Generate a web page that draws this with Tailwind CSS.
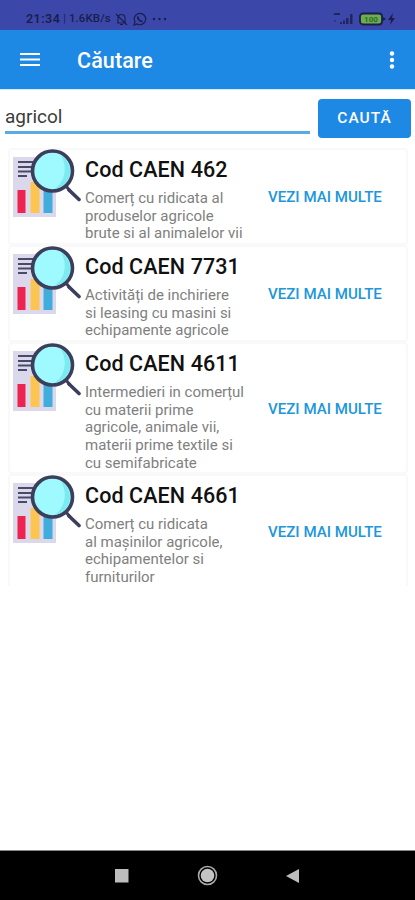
<!DOCTYPE html>
<html lang="ro">
<head>
<meta charset="utf-8">
<title>Căutare</title>
<script src="https://cdn.jsdelivr.net/npm/@tailwindcss/browser@4"></script>
</head>
<body class="bg-white">
<svg class="hidden">
  <symbol id="report" viewBox="0 0 72 70">
    <rect x="4" y="8" width="43" height="60" fill="#dcd8ec"/>
    <path d="M9 13h15M9 18h15M9 22.500h13M9 27h9" stroke="#474a68" stroke-width="1.800"/>
    <rect x="8.500" y="41" width="8" height="23" fill="#ee2350"/>
    <rect x="21.500" y="33" width="9" height="31" fill="#fcc552"/>
    <rect x="34.500" y="41" width="9" height="23" fill="#41addd"/>
    <path d="M57 37l4 5" stroke="#3b3f5b" stroke-width="3"/>
    <path d="M60 41l10 9.500" stroke="#3b3f5b" stroke-width="3.600" stroke-linecap="round"/>
    <circle cx="43.500" cy="22" r="20" fill="#9ffaff" stroke="#3b3f5b" stroke-width="3.600"/>
    <path d="M52 6.500a18 18 0 0 1-7 33.500c11-6 14-22 7-33.500z" fill="#7ceaf1"/>
  </symbol>
</svg>
<div class="flex h-[900px] w-[415px] flex-col overflow-hidden bg-white font-['Roboto',sans-serif]">
  <header class="flex h-[30px] shrink-0 items-center bg-[#3b48aa] pt-[8px] pl-[26px] text-[#191e4c]">
    <span class="text-[12.5px] font-semibold tracking-[0.45px] whitespace-nowrap">21:34</span>
    <span class="ml-[3px] text-[11px]">|</span>
    <span class="ml-[3px] w-[43px] text-[11.5px] font-medium tracking-[0.1px] whitespace-nowrap">1.6KB/s</span>
    <svg class="ml-[3px]" width="13" height="14" viewBox="0 0 13 14" fill="none" stroke="currentColor" stroke-width="1.100"><path d="M2 11h9M3 10.500V6a3.500 3.500 0 0 1 7 0v4.500M5 12.500h3M1 2l11 11"/></svg>
    <svg class="ml-[5px]" width="14" height="14" viewBox="0 0 14 14" fill="none" stroke="currentColor" stroke-width="1.200"><path d="M1 13l1-3.200A5.700 5.700 0 1 1 4.200 12z"/><path d="M4.800 4.500c0 2.500 2 4.800 4.700 5" stroke-width="1.900"/></svg>
    <svg class="ml-[5px]" width="16" height="4" viewBox="0 0 16 4" fill="currentColor"><circle cx="2" cy="2" r="1.200"/><circle cx="7.500" cy="2" r="1.200"/><circle cx="13" cy="2" r="1.200"/></svg>
    <svg class="ml-auto" width="22" height="14" viewBox="0 0 22 14" fill="currentColor"><path d="M1 3l2-2h5v2zM8 10h2v2H8zM11 8.500h2V12h-2zM14 6h2.500v6H14zM18 2h2.500v10H18z" opacity=".8"/><rect x="2" y="8" width="2" height="1.500" opacity=".5"/></svg>
    <svg class="ml-[5px]" width="27" height="14" viewBox="0 0 27 14"><rect x="1" y="1.500" width="22" height="11" rx="3" fill="#6cae4b" stroke="#191e4c" stroke-width="1.800"/><path d="M24 5l3 2-3 2z" fill="#191e4c"/><text x="12" y="9.800" text-anchor="middle" font-family="Roboto" font-size="8" font-weight="700" fill="#2f6b35">100</text></svg>
    <svg class="mr-[19px] ml-px" width="9" height="12" viewBox="0 0 9 12" fill="#191e4c"><path d="M6 0L1 7h3l-1 5 5-7H5z"/></svg>
  </header>
  <nav class="flex h-[59px] shrink-0 items-center bg-[#1e88e5] text-white">
    <svg class="ml-[20px]" width="20" height="18" viewBox="0 0 20 18" stroke="currentColor" stroke-width="2"><path d="M0 3h20M0 8.500h20M0 14h20"/></svg>
    <h1 class="ml-[37px] pt-[2px] text-[21.5px] leading-none font-medium tracking-[0.1px]">Căutare</h1>
    <svg class="mr-[20px] ml-auto" width="6" height="20" viewBox="0 0 6 20" fill="currentColor"><circle cx="3" cy="3.500" r="2.200"/><circle cx="3" cy="10" r="2.200"/><circle cx="3" cy="16.500" r="2.200"/></svg>
  </nav>
  <div class="flex h-[59px] shrink-0 items-start border-t border-[#d9e8fb] pl-[5px]">
    <div class="mt-[9px] flex h-[35px] w-[305px] items-center border-b-[3px] border-[#5aabe0] pt-[5px] text-[19px] text-[#3c3c3c]">agricol</div>
    <button class="mt-[9px] ml-[8px] h-[39px] w-[93px] rounded-[4px] bg-[#1e88e5] pt-px text-[15.5px] font-medium tracking-[1px] text-white">CAUTĂ</button>
  </div>
  <main class="flex flex-1 flex-col pr-[7px] pl-[8px]">
    <article class="flex h-[97px] shrink-0 rounded-[4px] border-2 border-[#f9f9f9]">
      <svg class="-mt-px -ml-px shrink-0" width="72" height="70"><use href="#report"/></svg>
      <div class="w-[176px] shrink-0 pt-[8px] pl-[4px] whitespace-nowrap">
        <h2 class="h-[32px] text-[21.5px] leading-[24px] font-medium tracking-[0.1px] text-[#111]">Cod CAEN 462</h2>
        <p class="text-[15px] leading-[17.65px] text-[#808080]">Comerț cu ridicata al<br>produselor agricole<br>brute si al animalelor vii</p>
      </div>
      <a class="ml-[11px] self-center pt-[2px] text-[15.1px] font-medium whitespace-nowrap text-[#2196dc]">VEZI MAI MULTE</a>
    </article>
    <article class="flex h-[97px] shrink-0 rounded-[4px] border-2 border-[#f9f9f9]">
      <svg class="-mt-px -ml-px shrink-0" width="72" height="70"><use href="#report"/></svg>
      <div class="w-[176px] shrink-0 pt-[8px] pl-[4px] whitespace-nowrap">
        <h2 class="h-[32px] text-[21.5px] leading-[24px] font-medium tracking-[0.1px] text-[#111]">Cod CAEN 7731</h2>
        <p class="text-[15px] leading-[17.65px] text-[#808080]">Activități de inchiriere<br>si leasing cu masini si<br>echipamente agricole</p>
      </div>
      <a class="ml-[11px] self-center pt-[2px] text-[15.1px] font-medium whitespace-nowrap text-[#2196dc]">VEZI MAI MULTE</a>
    </article>
    <article class="flex h-[132px] shrink-0 rounded-[4px] border-2 border-[#f9f9f9]">
      <svg class="-mt-px -ml-px shrink-0" width="72" height="70"><use href="#report"/></svg>
      <div class="w-[176px] shrink-0 pt-[8px] pl-[4px] whitespace-nowrap">
        <h2 class="h-[32px] text-[21.5px] leading-[24px] font-medium tracking-[0.1px] text-[#111]">Cod CAEN 4611</h2>
        <p class="text-[15px] leading-[17.65px] text-[#808080]">Intermedieri in comerțul<br>cu materii prime<br>agricole, animale vii,<br>materii prime textile si<br>cu semifabricate</p>
      </div>
      <a class="ml-[11px] self-center pt-[2px] text-[15.1px] font-medium whitespace-nowrap text-[#2196dc]">VEZI MAI MULTE</a>
    </article>
    <article class="flex h-[112px] shrink-0 rounded-t-[4px] border-2 border-b-0 border-[#f9f9f9]">
      <svg class="-mt-px -ml-px shrink-0" width="72" height="70"><use href="#report"/></svg>
      <div class="w-[176px] shrink-0 pt-[8px] pl-[4px] whitespace-nowrap">
        <h2 class="h-[32px] text-[21.5px] leading-[24px] font-medium tracking-[0.1px] text-[#111]">Cod CAEN 4661</h2>
        <p class="text-[15px] leading-[17.65px] text-[#808080]">Comerț cu ridicata<br>al mașinilor agricole,<br>echipamentelor si<br>furniturilor</p>
      </div>
      <a class="ml-[11px] self-center pt-[2px] text-[15.1px] font-medium whitespace-nowrap text-[#2196dc]">VEZI MAI MULTE</a>
    </article>
  </main>
  <footer class="flex h-[50px] shrink-0 items-center border-t border-[#888] bg-black pl-[114px]">
    <svg width="15" height="20" viewBox="0 0 15 20"><rect x="1" y="3" width="13.500" height="13.500" fill="#bdbdbd"/></svg>
    <svg class="ml-[68px]" width="21" height="21" viewBox="0 0 21 21"><circle cx="10.500" cy="10.500" r="9" fill="none" stroke="#aaa" stroke-width="1.600"/><circle cx="10.500" cy="10.500" r="6.800" fill="#c4c4c4"/></svg>
    <svg class="ml-[68px]" width="14" height="16" viewBox="0 0 14 16"><path d="M0 8L13 1v14z" fill="#bdbdbd"/></svg>
  </footer>
</div>
</body>
</html>
